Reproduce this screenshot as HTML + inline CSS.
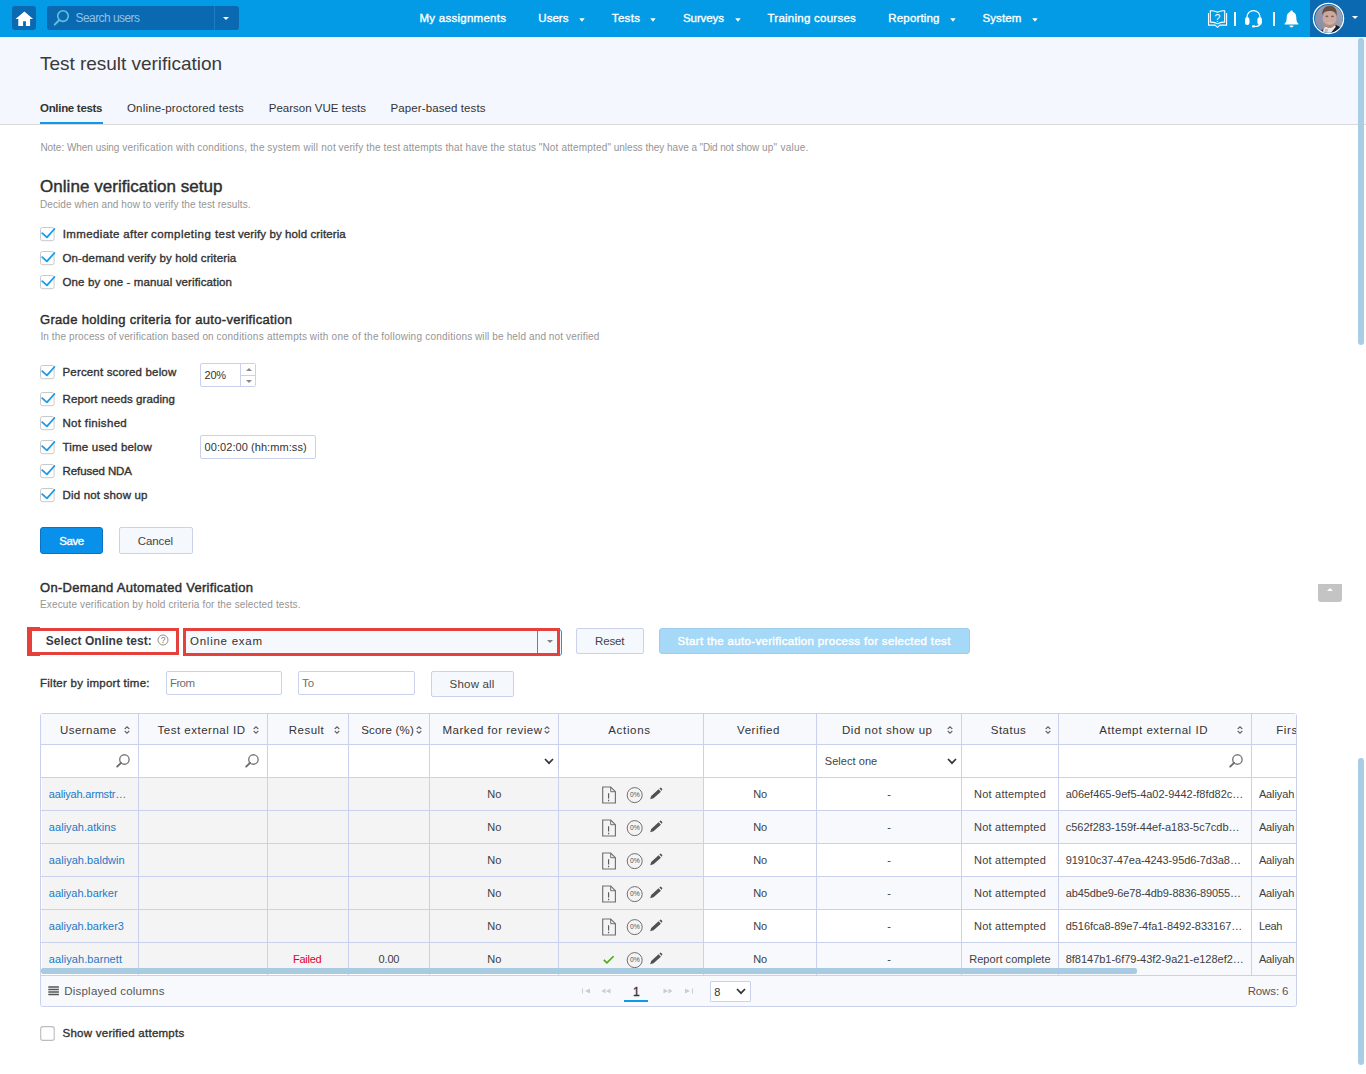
<!DOCTYPE html>
<html lang="en"><head><meta charset="utf-8"><title>Test result verification</title>
<style>
html,body{margin:0;padding:0}
body{width:1366px;height:1074px;position:relative;overflow:hidden;background:#fff;font-family:"Liberation Sans", "DejaVu Sans", sans-serif;}
.a{position:absolute;display:block}
.t{position:absolute;white-space:nowrap;display:block}
.nav{position:absolute;left:0;top:0;width:1366px;height:37px;background:#039be5}
.home,.search{background:#0a69b0;border-radius:3px}
.tri{width:0;height:0;border:3px solid transparent;border-bottom:0;border-top:3.5px solid #fff}
.inp{box-sizing:border-box;border:1px solid #cad1ec;border-radius:2px;background:#fff}
.btn{box-sizing:border-box;border:1px solid #cad1ec;border-radius:2px;background:#f5f8fc}
</style></head>
<body>
<!-- top navigation -->
<div class="nav">
<a class="a home" style="left:12px;top:6px;width:24px;height:24px;"><svg width="24" height="24" viewBox="0 0 24 24"><path d="M12.4 5.5 L3.5 13.1 H6.3 V20 H11.1 V15.2 H13.9 V20 H18.1 V13.1 H21.1 Z" fill="#fff"/></svg></a>
<div class="a search" style="left:47px;top:6px;width:192px;height:24px;">
<svg class="a" style="left:6px;top:4px" width="17" height="17" viewBox="0 0 17 17"><circle cx="10" cy="6.1" r="5.3" fill="none" stroke="#5fc1dd" stroke-width="1.6"/><path d="M6.3 10 L1.7 14.6" stroke="#5fc1dd" stroke-width="2" stroke-linecap="round"/></svg>
<div class="a" style="left:167px;top:0;width:1px;height:24px;background:#1b7fc6"></div>
<div class="a tri" style="left:176px;top:10.5px;border-top-color:#fff"></div>
</div>
<span class="t" id="t0" style="left:75.60px;top:12.00px;font-size:12px;line-height:12px;color:#8cc3ea;letter-spacing:-0.582px;">Search users</span>
<span class="t" id="t1" style="left:419.50px;top:13.00px;font-size:11.5px;line-height:11.5px;color:#fff;letter-spacing:0.262px;-webkit-text-stroke:0.35px #fff;">My assignments</span>
<span class="t" id="t2" style="left:538.30px;top:13.00px;font-size:11.5px;line-height:11.5px;color:#fff;letter-spacing:0.042px;-webkit-text-stroke:0.35px #fff;">Users</span>
<svg class="a" style="left:578.5px;top:18px" width="6" height="4" viewBox="0 0 6 4"><path d="M0.2 0.2 H5.7 L2.95 3.7 Z" fill="#fff"/></svg>
<span class="t" id="t3" style="left:611.80px;top:13.00px;font-size:11.5px;line-height:11.5px;color:#fff;letter-spacing:0.339px;-webkit-text-stroke:0.35px #fff;">Tests</span>
<svg class="a" style="left:650px;top:18px" width="6" height="4" viewBox="0 0 6 4"><path d="M0.2 0.2 H5.7 L2.95 3.7 Z" fill="#fff"/></svg>
<span class="t" id="t4" style="left:683.00px;top:13.00px;font-size:11.5px;line-height:11.5px;color:#fff;letter-spacing:-0.091px;-webkit-text-stroke:0.35px #fff;">Surveys</span>
<svg class="a" style="left:735px;top:18px" width="6" height="4" viewBox="0 0 6 4"><path d="M0.2 0.2 H5.7 L2.95 3.7 Z" fill="#fff"/></svg>
<span class="t" id="t5" style="left:767.50px;top:13.00px;font-size:11.5px;line-height:11.5px;color:#fff;letter-spacing:0.247px;-webkit-text-stroke:0.35px #fff;">Training courses</span>
<span class="t" id="t6" style="left:888.30px;top:13.00px;font-size:11.5px;line-height:11.5px;color:#fff;letter-spacing:0.166px;-webkit-text-stroke:0.35px #fff;">Reporting</span>
<svg class="a" style="left:950.2px;top:18px" width="6" height="4" viewBox="0 0 6 4"><path d="M0.2 0.2 H5.7 L2.95 3.7 Z" fill="#fff"/></svg>
<span class="t" id="t7" style="left:982.50px;top:13.00px;font-size:11.5px;line-height:11.5px;color:#fff;letter-spacing:0.091px;-webkit-text-stroke:0.35px #fff;">System</span>
<svg class="a" style="left:1032px;top:18px" width="6" height="4" viewBox="0 0 6 4"><path d="M0.2 0.2 H5.7 L2.95 3.7 Z" fill="#fff"/></svg>
<svg class="a" style="left:1207px;top:9px" width="21" height="20" viewBox="0 0 21 20">
<path d="M3.3 1.9 Q7 1.1 10.5 3.3 Q14 1.1 17.7 1.9 V13.3 Q14 12.7 10.5 14.9 Q7 12.7 3.3 13.3 Z" fill="none" stroke="#fff" stroke-width="1.1"/>
<path d="M1.5 3.9 V16.1 H8 L10.5 18.3 L13 16.1 H19.6 V3.9" fill="none" stroke="#fff" stroke-width="1.1"/>
<text x="10.4" y="13.1" font-size="10.5" fill="#fff" text-anchor="middle" font-family="Liberation Sans, sans-serif">?</text></svg>
<div class="a" style="left:1234px;top:12px;width:2px;height:14px;background:#fff;opacity:.92"></div>
<svg class="a" style="left:1244px;top:9px" width="19" height="19" viewBox="0 0 19 19">
<path d="M3 9.6 V8 A6.5 6.5 0 0 1 16 8 V9.6" fill="none" stroke="#fff" stroke-width="1.25"/>
<rect x="1" y="8.2" width="4.5" height="7.7" rx="2.2" fill="#fff"/><rect x="13.4" y="8.2" width="4.5" height="7.7" rx="2.2" fill="#fff"/>
<path d="M16.2 15 Q15.4 17.5 10.5 17.5" fill="none" stroke="#fff" stroke-width="1.2"/><ellipse cx="9.6" cy="17.4" rx="1.7" ry="1.05" fill="#fff"/></svg>
<div class="a" style="left:1273px;top:12px;width:2px;height:14px;background:#fff;opacity:.92"></div>
<svg class="a" style="left:1284px;top:9.5px" width="15" height="18" viewBox="0 0 15 18">
<path d="M7.5 0.6 C8.4 0.6 8.9 1.2 8.9 2 C11.3 2.7 12.3 4.8 12.3 7.4 C12.3 11 13 12.4 14.4 13.6 V14.6 H0.6 V13.6 C2 12.4 2.7 11 2.7 7.4 C2.7 4.8 3.7 2.7 6.1 2 C6.1 1.2 6.6 0.6 7.5 0.6 Z" fill="#fff"/>
<path d="M5.4 15.5 H9.6 A2.1 2.1 0 0 1 5.4 15.5 Z" fill="#e4f3fc"/></svg>
<div class="a" style="left:1310px;top:0px;width:56px;height:37px;background:#0a69b0"></div>
<svg class="a" style="left:1312px;top:2px" width="33" height="33" viewBox="0 0 33 33">
<defs><clipPath id="av"><circle cx="16.85" cy="16.9" r="13.85"/></clipPath>
<linearGradient id="avbg" x1="0" y1="1" x2="1" y2="0"><stop offset="0" stop-color="#7f869e"/><stop offset="1" stop-color="#a9abbc"/></linearGradient>
<filter id="avb" x="-10%" y="-10%" width="120%" height="120%"><feGaussianBlur stdDeviation="0.75"/></filter></defs>
<g clip-path="url(#av)"><g filter="url(#avb)"><rect x="-2" y="-2" width="37" height="37" fill="url(#avbg)"/>
<path d="M18.5 29 L24 23 L31 26.5 V35 H17 Z" fill="#1b1d28"/>
<path d="M6 31 L11 27 L13 33 Z" fill="#3a3d4c"/>
<path d="M10.5 30.5 L12.5 25.5 L20.5 22.5 L24 24.5 L18.5 31.5 Z" fill="#eae6e6"/>
<path d="M12.5 29.5 L13.5 26.5 L16.5 27.5 L14.5 31 Z" fill="#d6b0a2"/>
<ellipse cx="17.6" cy="16.6" rx="6.9" ry="8.6" fill="#cda89c"/>
<path d="M10.3 13.5 C9.6 6.5 14 3.6 18 3.8 C22.6 4 25.6 7.6 24.6 14 C23.6 10.4 22 9 18 9 C14 9 11.6 9.6 10.3 13.5 Z" fill="#6a4f41"/>
<path d="M11.6 19 C12.4 24.6 15 26 17.6 26 C20.2 26 23 24.6 23.8 19 C22.6 22 20.6 23 17.6 23 C14.6 23 12.8 22 11.6 19 Z" fill="#b08c7e"/>
<ellipse cx="14.9" cy="14.4" rx="1.5" ry="0.8" fill="#7c5f55"/><ellipse cx="20.5" cy="14.4" rx="1.5" ry="0.8" fill="#7c5f55"/>
<path d="M15.4 20.5 Q17.6 21.8 20 20.5" fill="none" stroke="#dcc8c2" stroke-width="0.7"/>
</g></g><circle cx="16.5" cy="16.45" r="15.1" fill="none" stroke="#fff" stroke-width="1.25"/></svg>
<div class="a tri" style="left:1352px;top:16px;border-top-color:#fff"></div>
</div>
<!-- page header and tabs -->
<div class="a" style="left:0px;top:37px;width:1366px;height:87px;background:#f4f7fe;border-bottom:1px solid #d9d9d9"></div>
<span class="t" id="t8" style="left:40.00px;top:54.00px;font-size:19px;line-height:19px;color:#3a3a3a;letter-spacing:-0.030px;">Test result verification</span>
<span class="t" id="t9" style="left:40.00px;top:103.00px;font-size:11.5px;line-height:11.5px;color:#333;letter-spacing:-0.303px;font-weight:bold;">Online tests</span>
<div class="a" style="left:40px;top:122px;width:63px;height:2px;background:#0d9ae8"></div>
<span class="t" id="t10" style="left:127.00px;top:103.00px;font-size:11.5px;line-height:11.5px;color:#333;letter-spacing:0.172px;">Online-proctored tests</span>
<span class="t" id="t11" style="left:268.75px;top:103.00px;font-size:11.5px;line-height:11.5px;color:#333;letter-spacing:0.006px;">Pearson VUE tests</span>
<span class="t" id="t12" style="left:390.50px;top:103.00px;font-size:11.5px;line-height:11.5px;color:#333;letter-spacing:0.104px;">Paper-based tests</span>
<div class="a" style="left:1358px;top:37.5px;width:6px;height:307px;background:#a9cde5;border-radius:3px"></div>
<div class="a" style="left:1357.5px;top:758px;width:6px;height:307px;background:#a9cde5;border-radius:3px"></div>
<div class="a" style="left:1318px;top:584px;width:24px;height:18px;background:#c4c4c4;border-radius:0 0 3px 3px"><div class="a" style="left:9px;top:3.8px;border:3px solid transparent;border-top:0;border-bottom:3.5px solid #fff;width:0;height:0"></div></div>
<!-- online verification setup -->
<span class="t" id="t13" style="left:40.40px;top:143.00px;font-size:10px;line-height:10px;color:#959595;letter-spacing:-0.030px;">Note: When using</span><span class="t" id="t14" style="left:122.25px;top:143.00px;font-size:10px;line-height:10px;color:#959595;letter-spacing:0.240px;">verification with</span><span class="t" id="t15" style="left:197.25px;top:143.00px;font-size:10px;line-height:10px;color:#959595;letter-spacing:0.193px;">conditions, the</span><span class="t" id="t16" style="left:267.25px;top:143.00px;font-size:10px;line-height:10px;color:#959595;letter-spacing:0.245px;">system will not</span><span class="t" id="t17" style="left:338.50px;top:143.00px;font-size:10px;line-height:10px;color:#959595;letter-spacing:0.159px;">verify the test</span><span class="t" id="t18" style="left:403.00px;top:143.00px;font-size:10px;line-height:10px;color:#959595;letter-spacing:0.142px;">attempts that have</span><span class="t" id="t19" style="left:490.50px;top:143.00px;font-size:10px;line-height:10px;color:#959595;letter-spacing:0.232px;">the status</span><span class="t" id="t20" style="left:538.75px;top:143.00px;font-size:10px;line-height:10px;color:#959595;letter-spacing:0.163px;">&quot;Not attempted&quot;</span><span class="t" id="t21" style="left:613.75px;top:143.00px;font-size:10px;line-height:10px;color:#959595;letter-spacing:-0.007px;">unless they have</span><span class="t" id="t22" style="left:691.50px;top:143.00px;font-size:10px;line-height:10px;color:#959595;letter-spacing:-0.143px;">a &quot;Did not show</span><span class="t" id="t23" style="left:762.00px;top:143.00px;font-size:10px;line-height:10px;color:#959595;letter-spacing:0.240px;">up&quot; value.</span>
<span class="t" id="t24" style="left:40.00px;top:178.00px;font-size:17px;line-height:17px;color:#2e2e2e;letter-spacing:0.044px;-webkit-text-stroke:0.42px #2e2e2e;">Online verification setup</span>
<span class="t" id="t25" style="left:40.00px;top:200.00px;font-size:10px;line-height:10px;color:#959595;letter-spacing:0.081px;">Decide when and how to verify the test results.</span>
<svg class="a" style="left:40px;top:227px" width="16" height="15" viewBox="0 0 16 15"><rect x="0.5" y="0.5" width="13.6" height="13.2" rx="2" fill="#fff" stroke="#c9c9c9"/><path d="M2.2 6.1 L6.9 10.4 L14.4 2" fill="none" stroke="#1a9be8" stroke-width="1.8" stroke-linecap="round" stroke-linejoin="round"/></svg>
<span class="t" id="t26" style="left:62.70px;top:229.00px;font-size:11.5px;line-height:11.5px;color:#333;letter-spacing:0.373px;-webkit-text-stroke:0.35px #333;">Immediate after</span><span class="t" id="t27" style="left:151.00px;top:229.00px;font-size:11.5px;line-height:11.5px;color:#333;letter-spacing:0.462px;-webkit-text-stroke:0.35px #333;">completing test</span><span class="t" id="t28" style="left:238.00px;top:229.00px;font-size:11.5px;line-height:11.5px;color:#333;letter-spacing:0.104px;-webkit-text-stroke:0.35px #333;">verify by hold criteria</span>
<svg class="a" style="left:40px;top:251px" width="16" height="15" viewBox="0 0 16 15"><rect x="0.5" y="0.5" width="13.6" height="13.2" rx="2" fill="#fff" stroke="#c9c9c9"/><path d="M2.2 6.1 L6.9 10.4 L14.4 2" fill="none" stroke="#1a9be8" stroke-width="1.8" stroke-linecap="round" stroke-linejoin="round"/></svg>
<span class="t" id="t29" style="left:62.50px;top:253.00px;font-size:11.5px;line-height:11.5px;color:#333;letter-spacing:0.136px;-webkit-text-stroke:0.35px #333;">On-demand verify by hold criteria</span>
<svg class="a" style="left:40px;top:275px" width="16" height="15" viewBox="0 0 16 15"><rect x="0.5" y="0.5" width="13.6" height="13.2" rx="2" fill="#fff" stroke="#c9c9c9"/><path d="M2.2 6.1 L6.9 10.4 L14.4 2" fill="none" stroke="#1a9be8" stroke-width="1.8" stroke-linecap="round" stroke-linejoin="round"/></svg>
<span class="t" id="t30" style="left:62.50px;top:277.00px;font-size:11.5px;line-height:11.5px;color:#333;letter-spacing:0.127px;-webkit-text-stroke:0.35px #333;">One by one - manual verification</span>
<span class="t" id="t31" style="left:40.00px;top:313.00px;font-size:13px;line-height:13px;color:#2e2e2e;letter-spacing:0.315px;-webkit-text-stroke:0.42px #2e2e2e;">Grade holding criteria for auto-verification</span>
<span class="t" id="t32" style="left:40.40px;top:332.00px;font-size:10px;line-height:10px;color:#959595;letter-spacing:0.116px;">In the process of</span><span class="t" id="t33" style="left:119.00px;top:332.00px;font-size:10px;line-height:10px;color:#959595;letter-spacing:0.148px;">verification based on</span><span class="t" id="t34" style="left:216.50px;top:332.00px;font-size:10px;line-height:10px;color:#959595;letter-spacing:0.238px;">conditions attempts</span><span class="t" id="t35" style="left:309.75px;top:332.00px;font-size:10px;line-height:10px;color:#959595;letter-spacing:0.261px;">with one of the</span><span class="t" id="t36" style="left:381.25px;top:332.00px;font-size:10px;line-height:10px;color:#959595;letter-spacing:0.223px;">following conditions</span><span class="t" id="t37" style="left:475.00px;top:332.00px;font-size:10px;line-height:10px;color:#959595;letter-spacing:0.134px;">will be held and</span><span class="t" id="t38" style="left:548.75px;top:332.00px;font-size:10px;line-height:10px;color:#959595;letter-spacing:0.148px;">not verified</span>
<svg class="a" style="left:40px;top:365px" width="16" height="15" viewBox="0 0 16 15"><rect x="0.5" y="0.5" width="13.6" height="13.2" rx="2" fill="#fff" stroke="#c9c9c9"/><path d="M2.2 6.1 L6.9 10.4 L14.4 2" fill="none" stroke="#1a9be8" stroke-width="1.8" stroke-linecap="round" stroke-linejoin="round"/></svg>
<span class="t" id="t39" style="left:62.50px;top:367.00px;font-size:11.5px;line-height:11.5px;color:#333;letter-spacing:0.166px;-webkit-text-stroke:0.35px #333;">Percent scored below</span>
<svg class="a" style="left:40px;top:392px" width="16" height="15" viewBox="0 0 16 15"><rect x="0.5" y="0.5" width="13.6" height="13.2" rx="2" fill="#fff" stroke="#c9c9c9"/><path d="M2.2 6.1 L6.9 10.4 L14.4 2" fill="none" stroke="#1a9be8" stroke-width="1.8" stroke-linecap="round" stroke-linejoin="round"/></svg>
<span class="t" id="t40" style="left:62.50px;top:394.00px;font-size:11.5px;line-height:11.5px;color:#333;letter-spacing:0.100px;-webkit-text-stroke:0.35px #333;">Report needs grading</span>
<svg class="a" style="left:40px;top:416px" width="16" height="15" viewBox="0 0 16 15"><rect x="0.5" y="0.5" width="13.6" height="13.2" rx="2" fill="#fff" stroke="#c9c9c9"/><path d="M2.2 6.1 L6.9 10.4 L14.4 2" fill="none" stroke="#1a9be8" stroke-width="1.8" stroke-linecap="round" stroke-linejoin="round"/></svg>
<span class="t" id="t41" style="left:62.50px;top:418.00px;font-size:11.5px;line-height:11.5px;color:#333;letter-spacing:0.320px;-webkit-text-stroke:0.35px #333;">Not finished</span>
<svg class="a" style="left:40px;top:440px" width="16" height="15" viewBox="0 0 16 15"><rect x="0.5" y="0.5" width="13.6" height="13.2" rx="2" fill="#fff" stroke="#c9c9c9"/><path d="M2.2 6.1 L6.9 10.4 L14.4 2" fill="none" stroke="#1a9be8" stroke-width="1.8" stroke-linecap="round" stroke-linejoin="round"/></svg>
<span class="t" id="t42" style="left:62.50px;top:442.00px;font-size:11.5px;line-height:11.5px;color:#333;letter-spacing:0.195px;-webkit-text-stroke:0.35px #333;">Time used below</span>
<svg class="a" style="left:40px;top:464px" width="16" height="15" viewBox="0 0 16 15"><rect x="0.5" y="0.5" width="13.6" height="13.2" rx="2" fill="#fff" stroke="#c9c9c9"/><path d="M2.2 6.1 L6.9 10.4 L14.4 2" fill="none" stroke="#1a9be8" stroke-width="1.8" stroke-linecap="round" stroke-linejoin="round"/></svg>
<span class="t" id="t43" style="left:62.50px;top:466.00px;font-size:11.5px;line-height:11.5px;color:#333;letter-spacing:-0.081px;-webkit-text-stroke:0.35px #333;">Refused NDA</span>
<svg class="a" style="left:40px;top:488px" width="16" height="15" viewBox="0 0 16 15"><rect x="0.5" y="0.5" width="13.6" height="13.2" rx="2" fill="#fff" stroke="#c9c9c9"/><path d="M2.2 6.1 L6.9 10.4 L14.4 2" fill="none" stroke="#1a9be8" stroke-width="1.8" stroke-linecap="round" stroke-linejoin="round"/></svg>
<span class="t" id="t44" style="left:62.50px;top:490.00px;font-size:11.5px;line-height:11.5px;color:#333;letter-spacing:0.181px;-webkit-text-stroke:0.35px #333;">Did not show up</span>
<div class="a inp" style="left:200px;top:363px;width:56px;height:24px;"><div class="a" style="left:39px;top:0;width:1px;height:22px;background:#cad1ec"></div><div class="a" style="left:40px;top:0;width:14px;height:22px;background:#fff"></div><div class="a" style="left:40px;top:11px;width:14px;height:1px;background:#cad1ec"></div><div class="a" style="left:45px;top:3.5px;border:3px solid transparent;border-top:0;border-bottom:3.5px solid #888;width:0;height:0"></div><div class="a" style="left:45px;top:15.5px;border:3px solid transparent;border-bottom:0;border-top:3.5px solid #888;width:0;height:0"></div></div>
<span class="t" id="t45" style="left:204.60px;top:370.00px;font-size:11px;line-height:11px;color:#333;letter-spacing:-0.266px;">20%</span>
<div class="a inp" style="left:200px;top:435px;width:116px;height:24px;"></div>
<span class="t" id="t46" style="left:204.60px;top:442.00px;font-size:11px;line-height:11px;color:#333;letter-spacing:0.063px;">00:02:00 (hh:mm:ss)</span>
<div class="a" style="left:40px;top:527px;width:63px;height:27px;background:#0990ea;border:1px solid #0b73c6;box-sizing:border-box;border-radius:3px"></div>
<span class="t" id="t47" style="left:59.25px;top:536.00px;font-size:11.5px;line-height:11.5px;color:#fff;letter-spacing:-0.456px;-webkit-text-stroke:0.35px #fff;">Save</span>
<div class="a btn" style="left:119px;top:527px;width:74px;height:27px;"></div>
<span class="t" id="t48" style="left:137.80px;top:536.00px;font-size:11.5px;line-height:11.5px;color:#444;letter-spacing:-0.103px;">Cancel</span>
<!-- on-demand automated verification -->
<span class="t" id="t49" style="left:40.00px;top:581.00px;font-size:13px;line-height:13px;color:#2e2e2e;letter-spacing:0.297px;-webkit-text-stroke:0.42px #2e2e2e;">On-Demand Automated Verification</span>
<span class="t" id="t50" style="left:40.00px;top:600.00px;font-size:10px;line-height:10px;color:#959595;letter-spacing:0.136px;">Execute verification by hold criteria for the selected tests.</span>
<div class="a" style="left:27px;top:628px;width:152px;height:27px;border:3px solid #e5403c;border-left-width:5px;box-sizing:border-box"></div>
<div class="a" style="left:27px;top:627px;width:13px;height:2px;background:#e5403c"></div>
<div class="a" style="left:27px;top:654px;width:13px;height:2px;background:#e5403c"></div>
<span class="t" id="t51" style="left:45.70px;top:635.00px;font-size:12px;line-height:12px;color:#3a3a44;letter-spacing:0.078px;font-weight:bold;">Select Online test:</span>
<svg class="a" style="left:156.5px;top:633.5px" width="12" height="12" viewBox="0 0 12 12"><circle cx="6" cy="6" r="5" fill="none" stroke="#858585" stroke-width="0.9"/><text x="6" y="9" font-size="8.5" fill="#7a7a7a" text-anchor="middle" font-family="Liberation Sans, sans-serif">?</text></svg>
<div class="a" style="left:184px;top:629px;width:377.6px;height:27px;background:#f5f8fc;border:1px solid #1a9be8;border-radius:3px;box-sizing:border-box"></div>
<div class="a" style="left:537px;top:630px;width:1px;height:24px;background:#1a9be8"></div>
<div class="a tri" style="left:547px;top:639.5px;border-top-color:#828282"></div>
<div class="a" style="left:183px;top:628px;width:377px;height:28px;border:3px solid #e5403c;box-sizing:border-box"></div>
<span class="t" id="t52" style="left:190.00px;top:636.00px;font-size:11.5px;line-height:11.5px;color:#333;letter-spacing:0.744px;">Online exam</span>
<div class="a btn" style="left:576px;top:628px;width:68px;height:26px;"></div>
<span class="t" id="t53" style="left:595.00px;top:636.00px;font-size:11.5px;line-height:11.5px;color:#444;letter-spacing:-0.162px;">Reset</span>
<div class="a" style="left:659px;top:628px;width:311px;height:26px;background:#a6d8f7;border:1px solid #9fcdec;box-sizing:border-box;border-radius:3px"></div>
<span class="t" id="t54" style="left:677.60px;top:636.00px;font-size:11.5px;line-height:11.5px;color:#fff;letter-spacing:0.329px;-webkit-text-stroke:0.42px #fff;">Start the auto-verification process for selected test</span>
<span class="t" id="t55" style="left:40.00px;top:678.00px;font-size:11.5px;line-height:11.5px;color:#333;letter-spacing:0.254px;-webkit-text-stroke:0.35px #333;">Filter by import time:</span>
<div class="a inp" style="left:166px;top:671px;width:116px;height:24px;"></div>
<span class="t" id="t56" style="left:170.00px;top:678.00px;font-size:11.5px;line-height:11.5px;color:#707070;letter-spacing:-0.615px;">From</span>
<div class="a inp" style="left:298px;top:671px;width:117px;height:24px;"></div>
<span class="t" id="t57" style="left:302.00px;top:678.00px;font-size:11.5px;line-height:11.5px;color:#707070;letter-spacing:0.094px;">To</span>
<div class="a btn" style="left:431px;top:671px;width:83px;height:26px;"></div>
<span class="t" id="t58" style="left:449.60px;top:679.00px;font-size:11.5px;line-height:11.5px;color:#444;letter-spacing:0.190px;">Show all</span>
<!-- results table -->
<div class="a" style="left:40px;top:713px;width:1257px;height:294px;border:1px solid #cad1ec;border-radius:3px;box-sizing:border-box;background:#fff"></div>
<div class="a" style="left:41px;top:714px;width:1255px;height:30px;background:#f8f9fd"></div>
<div class="a" style="left:703px;top:811px;width:593px;height:32px;background:#f8f9fd"></div>
<div class="a" style="left:703px;top:877px;width:593px;height:32px;background:#f8f9fd"></div>
<div class="a" style="left:703px;top:943px;width:593px;height:32px;background:#f8f9fd"></div>
<div class="a" style="left:42px;top:778px;width:661px;height:190px;background:#f4f4f4"></div>
<div class="a" style="left:41px;top:975px;width:1255px;height:31px;background:#f8f9fd;border-top:1px solid #cad1ec;box-sizing:border-box;border-radius:0 0 3px 3px"></div>
<div class="a" style="left:41px;top:744px;width:1255px;height:1px;background:#cad1ec"></div>
<div class="a" style="left:41px;top:777px;width:1255px;height:1px;background:#cad1ec"></div>
<div class="a" style="left:41px;top:810px;width:1255px;height:1px;background:#cad1ec"></div>
<div class="a" style="left:41px;top:843px;width:1255px;height:1px;background:#cad1ec"></div>
<div class="a" style="left:41px;top:876px;width:1255px;height:1px;background:#cad1ec"></div>
<div class="a" style="left:41px;top:909px;width:1255px;height:1px;background:#cad1ec"></div>
<div class="a" style="left:41px;top:942px;width:1255px;height:1px;background:#cad1ec"></div>
<div class="a" style="left:138px;top:714px;width:1px;height:261px;background:#cad1ec"></div>
<div class="a" style="left:267px;top:714px;width:1px;height:261px;background:#cad1ec"></div>
<div class="a" style="left:348px;top:714px;width:1px;height:261px;background:#cad1ec"></div>
<div class="a" style="left:429px;top:714px;width:1px;height:261px;background:#cad1ec"></div>
<div class="a" style="left:558px;top:714px;width:1px;height:261px;background:#cad1ec"></div>
<div class="a" style="left:703px;top:714px;width:1px;height:261px;background:#cad1ec"></div>
<div class="a" style="left:816px;top:714px;width:1px;height:261px;background:#cad1ec"></div>
<div class="a" style="left:961px;top:714px;width:1px;height:261px;background:#cad1ec"></div>
<div class="a" style="left:1058px;top:714px;width:1px;height:261px;background:#cad1ec"></div>
<div class="a" style="left:1251px;top:714px;width:1px;height:261px;background:#cad1ec"></div>
<div class="a" style="left:41px;top:968px;width:1096px;height:6px;background:#a9cbe2;border-radius:3px"></div>
<span class="t" id="t59" style="left:60.00px;top:725.00px;font-size:11.5px;line-height:11.5px;color:#333;letter-spacing:0.455px;">Username</span>
<svg class="a" style="left:124.25px;top:726px" width="6" height="8" viewBox="0 0 6 8"><path d="M0.7 3 L3 0.8 L5.3 3 M0.7 5 L3 7.2 L5.3 5" fill="none" stroke="#666" stroke-width="1.1"/></svg>
<span class="t" id="t60" style="left:157.50px;top:725.00px;font-size:11.5px;line-height:11.5px;color:#333;letter-spacing:0.506px;">Test external ID</span>
<svg class="a" style="left:253px;top:726px" width="6" height="8" viewBox="0 0 6 8"><path d="M0.7 3 L3 0.8 L5.3 3 M0.7 5 L3 7.2 L5.3 5" fill="none" stroke="#666" stroke-width="1.1"/></svg>
<span class="t" id="t61" style="left:288.75px;top:725.00px;font-size:11.5px;line-height:11.5px;color:#333;letter-spacing:0.478px;">Result</span>
<svg class="a" style="left:334px;top:726px" width="6" height="8" viewBox="0 0 6 8"><path d="M0.7 3 L3 0.8 L5.3 3 M0.7 5 L3 7.2 L5.3 5" fill="none" stroke="#666" stroke-width="1.1"/></svg>
<span class="t" id="t62" style="left:361.25px;top:725.00px;font-size:11.5px;line-height:11.5px;color:#333;letter-spacing:0.172px;">Score (%)</span>
<svg class="a" style="left:415.75px;top:726px" width="6" height="8" viewBox="0 0 6 8"><path d="M0.7 3 L3 0.8 L5.3 3 M0.7 5 L3 7.2 L5.3 5" fill="none" stroke="#666" stroke-width="1.1"/></svg>
<span class="t" id="t63" style="left:442.50px;top:725.00px;font-size:11.5px;line-height:11.5px;color:#333;letter-spacing:0.507px;">Marked for review</span>
<svg class="a" style="left:544.25px;top:726px" width="6" height="8" viewBox="0 0 6 8"><path d="M0.7 3 L3 0.8 L5.3 3 M0.7 5 L3 7.2 L5.3 5" fill="none" stroke="#666" stroke-width="1.1"/></svg>
<span class="t" id="t64" style="left:608.25px;top:725.00px;font-size:11.5px;line-height:11.5px;color:#333;letter-spacing:0.672px;">Actions</span>
<span class="t" id="t65" style="left:737.00px;top:725.00px;font-size:11.5px;line-height:11.5px;color:#333;letter-spacing:0.592px;">Verified</span>
<span class="t" id="t66" style="left:842.00px;top:725.00px;font-size:11.5px;line-height:11.5px;color:#333;letter-spacing:0.538px;">Did not show up</span>
<svg class="a" style="left:946.5px;top:726px" width="6" height="8" viewBox="0 0 6 8"><path d="M0.7 3 L3 0.8 L5.3 3 M0.7 5 L3 7.2 L5.3 5" fill="none" stroke="#666" stroke-width="1.1"/></svg>
<span class="t" id="t67" style="left:990.80px;top:725.00px;font-size:11.5px;line-height:11.5px;color:#333;letter-spacing:0.468px;">Status</span>
<svg class="a" style="left:1044.5px;top:726px" width="6" height="8" viewBox="0 0 6 8"><path d="M0.7 3 L3 0.8 L5.3 3 M0.7 5 L3 7.2 L5.3 5" fill="none" stroke="#666" stroke-width="1.1"/></svg>
<span class="t" id="t68" style="left:1099.25px;top:725.00px;font-size:11.5px;line-height:11.5px;color:#333;letter-spacing:0.545px;">Attempt external ID</span>
<svg class="a" style="left:1237px;top:726px" width="6" height="8" viewBox="0 0 6 8"><path d="M0.7 3 L3 0.8 L5.3 3 M0.7 5 L3 7.2 L5.3 5" fill="none" stroke="#666" stroke-width="1.1"/></svg>
<span class="t" id="t69" style="left:1276.25px;top:725.00px;font-size:11.5px;line-height:11.5px;color:#333;letter-spacing:0.598px;width:19.5px;overflow:hidden;">First</span>
<svg class="a" style="left:116.25px;top:754px" width="14" height="14" viewBox="0 0 14 14"><circle cx="8.4" cy="5.5" r="4.7" fill="none" stroke="#7a7a7a" stroke-width="1.4"/><path d="M5 8.9 L1.2 12.6" stroke="#6a6a6a" stroke-width="1.9" stroke-linecap="round"/></svg>
<svg class="a" style="left:245px;top:754px" width="14" height="14" viewBox="0 0 14 14"><circle cx="8.4" cy="5.5" r="4.7" fill="none" stroke="#7a7a7a" stroke-width="1.4"/><path d="M5 8.9 L1.2 12.6" stroke="#6a6a6a" stroke-width="1.9" stroke-linecap="round"/></svg>
<svg class="a" style="left:1229px;top:754px" width="14" height="14" viewBox="0 0 14 14"><circle cx="8.4" cy="5.5" r="4.7" fill="none" stroke="#7a7a7a" stroke-width="1.4"/><path d="M5 8.9 L1.2 12.6" stroke="#6a6a6a" stroke-width="1.9" stroke-linecap="round"/></svg>
<svg class="a" style="left:543.5px;top:758px" width="10" height="7" viewBox="0 0 10 7"><path d="M1 1 L5 5.2 L9 1" fill="none" stroke="#333" stroke-width="1.7"/></svg>
<svg class="a" style="left:946.5px;top:758px" width="10" height="7" viewBox="0 0 10 7"><path d="M1 1 L5 5.2 L9 1" fill="none" stroke="#333" stroke-width="1.7"/></svg>
<span class="t" id="t70" style="left:824.80px;top:756.00px;font-size:11px;line-height:11px;color:#444;letter-spacing:0.046px;">Select one</span>
<span class="t" id="t71" style="left:48.85px;top:789.00px;font-size:11px;line-height:11px;color:#1e78c6;letter-spacing:-0.191px;">aaliyah.armstr…</span>
<span class="t" id="t72" style="left:487.20px;top:789.00px;font-size:11px;line-height:11px;color:#404040;letter-spacing:0.038px;">No</span>
<svg class="a" style="left:601px;top:785.5px" width="16" height="18" viewBox="0 0 16 18"><path d="M1.7 1 H9.7 L14.4 5.7 V17 H1.7 Z" fill="none" stroke="#707070" stroke-width="1.15"/><path d="M9.7 1 V5.7 H14.4" fill="none" stroke="#707070" stroke-width="1"/><path d="M7.6 7.2 V12.4 M7.6 13.8 V15.2" stroke="#555" stroke-width="1.1"/></svg>
<svg class="a" style="left:625px;top:785.5px" width="18" height="18" viewBox="0 0 18 18"><circle cx="9.7" cy="9.1" r="7.5" fill="none" stroke="#707070" stroke-width="1"/><text x="9.9" y="11.4" font-size="6.8" fill="#555" text-anchor="middle" font-family="Liberation Sans, sans-serif">0%</text></svg>
<svg class="a" style="left:649px;top:786.5px" width="14" height="13" viewBox="0 0 14 13"><path d="M1.2 12.2 L2.2 9 L9.6 2.2 L11.9 4.7 L4.5 11.2 Z" fill="#505050"/><path d="M10.4 1.5 L11.3 0.7 Q11.8 0.4 12.3 0.9 L13.2 1.9 Q13.6 2.4 13.1 2.9 L12.6 3.8 Z" fill="#505050"/></svg>
<span class="t" id="t73" style="left:753.25px;top:789.00px;font-size:11px;line-height:11px;color:#404040;letter-spacing:-0.312px;">No</span>
<span class="t" id="t74" style="left:887.30px;top:789.00px;font-size:11px;line-height:11px;color:#404040;letter-spacing:0.000px;">-</span>
<span class="t" id="t75" style="left:974.00px;top:789.00px;font-size:11px;line-height:11px;color:#404040;letter-spacing:0.221px;">Not attempted</span>
<span class="t" id="t76" style="left:1065.70px;top:789.00px;font-size:11px;line-height:11px;color:#404040;letter-spacing:-0.012px;">a06ef465-9ef5-4a02-9442-f8fd82c…</span>
<span class="t" id="t77" style="left:1258.90px;top:789.00px;font-size:11px;line-height:11px;color:#404040;letter-spacing:-0.113px;">Aaliyah</span>
<span class="t" id="t78" style="left:48.85px;top:822.00px;font-size:11px;line-height:11px;color:#1e78c6;letter-spacing:0.038px;">aaliyah.atkins</span>
<span class="t" id="t79" style="left:487.20px;top:822.00px;font-size:11px;line-height:11px;color:#404040;letter-spacing:0.038px;">No</span>
<svg class="a" style="left:601px;top:818.5px" width="16" height="18" viewBox="0 0 16 18"><path d="M1.7 1 H9.7 L14.4 5.7 V17 H1.7 Z" fill="none" stroke="#707070" stroke-width="1.15"/><path d="M9.7 1 V5.7 H14.4" fill="none" stroke="#707070" stroke-width="1"/><path d="M7.6 7.2 V12.4 M7.6 13.8 V15.2" stroke="#555" stroke-width="1.1"/></svg>
<svg class="a" style="left:625px;top:818.5px" width="18" height="18" viewBox="0 0 18 18"><circle cx="9.7" cy="9.1" r="7.5" fill="none" stroke="#707070" stroke-width="1"/><text x="9.9" y="11.4" font-size="6.8" fill="#555" text-anchor="middle" font-family="Liberation Sans, sans-serif">0%</text></svg>
<svg class="a" style="left:649px;top:819.5px" width="14" height="13" viewBox="0 0 14 13"><path d="M1.2 12.2 L2.2 9 L9.6 2.2 L11.9 4.7 L4.5 11.2 Z" fill="#505050"/><path d="M10.4 1.5 L11.3 0.7 Q11.8 0.4 12.3 0.9 L13.2 1.9 Q13.6 2.4 13.1 2.9 L12.6 3.8 Z" fill="#505050"/></svg>
<span class="t" id="t80" style="left:753.25px;top:822.00px;font-size:11px;line-height:11px;color:#404040;letter-spacing:-0.312px;">No</span>
<span class="t" id="t81" style="left:887.30px;top:822.00px;font-size:11px;line-height:11px;color:#404040;letter-spacing:0.000px;">-</span>
<span class="t" id="t82" style="left:974.00px;top:822.00px;font-size:11px;line-height:11px;color:#404040;letter-spacing:0.221px;">Not attempted</span>
<span class="t" id="t83" style="left:1065.70px;top:822.00px;font-size:11px;line-height:11px;color:#404040;letter-spacing:0.007px;">c562f283-159f-44ef-a183-5c7cdb…</span>
<span class="t" id="t84" style="left:1258.90px;top:822.00px;font-size:11px;line-height:11px;color:#404040;letter-spacing:-0.113px;">Aaliyah</span>
<span class="t" id="t85" style="left:48.85px;top:855.00px;font-size:11px;line-height:11px;color:#1e78c6;letter-spacing:0.045px;">aaliyah.baldwin</span>
<span class="t" id="t86" style="left:487.20px;top:855.00px;font-size:11px;line-height:11px;color:#404040;letter-spacing:0.038px;">No</span>
<svg class="a" style="left:601px;top:851.5px" width="16" height="18" viewBox="0 0 16 18"><path d="M1.7 1 H9.7 L14.4 5.7 V17 H1.7 Z" fill="none" stroke="#707070" stroke-width="1.15"/><path d="M9.7 1 V5.7 H14.4" fill="none" stroke="#707070" stroke-width="1"/><path d="M7.6 7.2 V12.4 M7.6 13.8 V15.2" stroke="#555" stroke-width="1.1"/></svg>
<svg class="a" style="left:625px;top:851.5px" width="18" height="18" viewBox="0 0 18 18"><circle cx="9.7" cy="9.1" r="7.5" fill="none" stroke="#707070" stroke-width="1"/><text x="9.9" y="11.4" font-size="6.8" fill="#555" text-anchor="middle" font-family="Liberation Sans, sans-serif">0%</text></svg>
<svg class="a" style="left:649px;top:852.5px" width="14" height="13" viewBox="0 0 14 13"><path d="M1.2 12.2 L2.2 9 L9.6 2.2 L11.9 4.7 L4.5 11.2 Z" fill="#505050"/><path d="M10.4 1.5 L11.3 0.7 Q11.8 0.4 12.3 0.9 L13.2 1.9 Q13.6 2.4 13.1 2.9 L12.6 3.8 Z" fill="#505050"/></svg>
<span class="t" id="t87" style="left:753.25px;top:855.00px;font-size:11px;line-height:11px;color:#404040;letter-spacing:-0.312px;">No</span>
<span class="t" id="t88" style="left:887.30px;top:855.00px;font-size:11px;line-height:11px;color:#404040;letter-spacing:0.000px;">-</span>
<span class="t" id="t89" style="left:974.00px;top:855.00px;font-size:11px;line-height:11px;color:#404040;letter-spacing:0.221px;">Not attempted</span>
<span class="t" id="t90" style="left:1065.70px;top:855.00px;font-size:11px;line-height:11px;color:#404040;letter-spacing:-0.096px;">91910c37-47ea-4243-95d6-7d3a8…</span>
<span class="t" id="t91" style="left:1258.90px;top:855.00px;font-size:11px;line-height:11px;color:#404040;letter-spacing:-0.113px;">Aaliyah</span>
<span class="t" id="t92" style="left:48.85px;top:888.00px;font-size:11px;line-height:11px;color:#1e78c6;letter-spacing:-0.026px;">aaliyah.barker</span>
<span class="t" id="t93" style="left:487.20px;top:888.00px;font-size:11px;line-height:11px;color:#404040;letter-spacing:0.038px;">No</span>
<svg class="a" style="left:601px;top:884.5px" width="16" height="18" viewBox="0 0 16 18"><path d="M1.7 1 H9.7 L14.4 5.7 V17 H1.7 Z" fill="none" stroke="#707070" stroke-width="1.15"/><path d="M9.7 1 V5.7 H14.4" fill="none" stroke="#707070" stroke-width="1"/><path d="M7.6 7.2 V12.4 M7.6 13.8 V15.2" stroke="#555" stroke-width="1.1"/></svg>
<svg class="a" style="left:625px;top:884.5px" width="18" height="18" viewBox="0 0 18 18"><circle cx="9.7" cy="9.1" r="7.5" fill="none" stroke="#707070" stroke-width="1"/><text x="9.9" y="11.4" font-size="6.8" fill="#555" text-anchor="middle" font-family="Liberation Sans, sans-serif">0%</text></svg>
<svg class="a" style="left:649px;top:885.5px" width="14" height="13" viewBox="0 0 14 13"><path d="M1.2 12.2 L2.2 9 L9.6 2.2 L11.9 4.7 L4.5 11.2 Z" fill="#505050"/><path d="M10.4 1.5 L11.3 0.7 Q11.8 0.4 12.3 0.9 L13.2 1.9 Q13.6 2.4 13.1 2.9 L12.6 3.8 Z" fill="#505050"/></svg>
<span class="t" id="t94" style="left:753.25px;top:888.00px;font-size:11px;line-height:11px;color:#404040;letter-spacing:-0.312px;">No</span>
<span class="t" id="t95" style="left:887.30px;top:888.00px;font-size:11px;line-height:11px;color:#404040;letter-spacing:0.000px;">-</span>
<span class="t" id="t96" style="left:974.00px;top:888.00px;font-size:11px;line-height:11px;color:#404040;letter-spacing:0.221px;">Not attempted</span>
<span class="t" id="t97" style="left:1065.70px;top:888.00px;font-size:11px;line-height:11px;color:#404040;letter-spacing:-0.114px;">ab45dbe9-6e78-4db9-8836-89055…</span>
<span class="t" id="t98" style="left:1258.90px;top:888.00px;font-size:11px;line-height:11px;color:#404040;letter-spacing:-0.113px;">Aaliyah</span>
<span class="t" id="t99" style="left:48.85px;top:921.00px;font-size:11px;line-height:11px;color:#1e78c6;letter-spacing:-0.005px;">aaliyah.barker3</span>
<span class="t" id="t100" style="left:487.20px;top:921.00px;font-size:11px;line-height:11px;color:#404040;letter-spacing:0.038px;">No</span>
<svg class="a" style="left:601px;top:917.5px" width="16" height="18" viewBox="0 0 16 18"><path d="M1.7 1 H9.7 L14.4 5.7 V17 H1.7 Z" fill="none" stroke="#707070" stroke-width="1.15"/><path d="M9.7 1 V5.7 H14.4" fill="none" stroke="#707070" stroke-width="1"/><path d="M7.6 7.2 V12.4 M7.6 13.8 V15.2" stroke="#555" stroke-width="1.1"/></svg>
<svg class="a" style="left:625px;top:917.5px" width="18" height="18" viewBox="0 0 18 18"><circle cx="9.7" cy="9.1" r="7.5" fill="none" stroke="#707070" stroke-width="1"/><text x="9.9" y="11.4" font-size="6.8" fill="#555" text-anchor="middle" font-family="Liberation Sans, sans-serif">0%</text></svg>
<svg class="a" style="left:649px;top:918.5px" width="14" height="13" viewBox="0 0 14 13"><path d="M1.2 12.2 L2.2 9 L9.6 2.2 L11.9 4.7 L4.5 11.2 Z" fill="#505050"/><path d="M10.4 1.5 L11.3 0.7 Q11.8 0.4 12.3 0.9 L13.2 1.9 Q13.6 2.4 13.1 2.9 L12.6 3.8 Z" fill="#505050"/></svg>
<span class="t" id="t101" style="left:753.25px;top:921.00px;font-size:11px;line-height:11px;color:#404040;letter-spacing:-0.312px;">No</span>
<span class="t" id="t102" style="left:887.30px;top:921.00px;font-size:11px;line-height:11px;color:#404040;letter-spacing:0.000px;">-</span>
<span class="t" id="t103" style="left:974.00px;top:921.00px;font-size:11px;line-height:11px;color:#404040;letter-spacing:0.221px;">Not attempted</span>
<span class="t" id="t104" style="left:1065.70px;top:921.00px;font-size:11px;line-height:11px;color:#404040;letter-spacing:-0.046px;">d516fca8-89e7-4fa1-8492-833167…</span>
<span class="t" id="t105" style="left:1258.90px;top:921.00px;font-size:11px;line-height:11px;color:#404040;letter-spacing:-0.295px;">Leah</span>
<span class="t" id="t106" style="left:48.85px;top:954.00px;font-size:11px;line-height:11px;color:#1e78c6;letter-spacing:0.070px;">aaliyah.barnett</span>
<span class="t" id="t107" style="left:487.20px;top:954.00px;font-size:11px;line-height:11px;color:#404040;letter-spacing:0.038px;">No</span>
<svg class="a" style="left:602px;top:954.5px" width="13" height="10" viewBox="0 0 13 10"><path d="M1.8 4.9 L4.9 7.9 L11.6 1.3" fill="none" stroke="#43ad14" stroke-width="1.6"/></svg>
<svg class="a" style="left:625px;top:950.5px" width="18" height="18" viewBox="0 0 18 18"><circle cx="9.7" cy="9.1" r="7.5" fill="none" stroke="#707070" stroke-width="1"/><text x="9.9" y="11.4" font-size="6.8" fill="#555" text-anchor="middle" font-family="Liberation Sans, sans-serif">0%</text></svg>
<svg class="a" style="left:649px;top:951.5px" width="14" height="13" viewBox="0 0 14 13"><path d="M1.2 12.2 L2.2 9 L9.6 2.2 L11.9 4.7 L4.5 11.2 Z" fill="#505050"/><path d="M10.4 1.5 L11.3 0.7 Q11.8 0.4 12.3 0.9 L13.2 1.9 Q13.6 2.4 13.1 2.9 L12.6 3.8 Z" fill="#505050"/></svg>
<span class="t" id="t108" style="left:753.25px;top:954.00px;font-size:11px;line-height:11px;color:#404040;letter-spacing:-0.312px;">No</span>
<span class="t" id="t109" style="left:887.30px;top:954.00px;font-size:11px;line-height:11px;color:#404040;letter-spacing:0.000px;">-</span>
<span class="t" id="t110" style="left:969.20px;top:954.00px;font-size:11px;line-height:11px;color:#404040;letter-spacing:0.049px;">Report complete</span>
<span class="t" id="t111" style="left:1065.70px;top:954.00px;font-size:11px;line-height:11px;color:#404040;letter-spacing:-0.016px;">8f8147b1-6f79-43f2-9a21-e128ef2…</span>
<span class="t" id="t112" style="left:1258.90px;top:954.00px;font-size:11px;line-height:11px;color:#404040;letter-spacing:-0.113px;">Aaliyah</span>
<span class="t" id="t113" style="left:293.00px;top:954.00px;font-size:11px;line-height:11px;color:#e2002d;letter-spacing:-0.244px;">Failed</span>
<span class="t" id="t114" style="left:378.50px;top:954.00px;font-size:11px;line-height:11px;color:#404040;letter-spacing:-0.141px;">0.00</span>
<div class="a" style="left:41px;top:968px;width:1096px;height:6px;background:#a9cbe2;border-radius:3px"></div>
<svg class="a" style="left:48px;top:986px" width="11" height="10" viewBox="0 0 11 10"><path d="M0.3 0.9 H10.9 M0.3 3.4 H10.9 M0.3 5.9 H10.9 M0.3 8.4 H10.9" stroke="#555" stroke-width="1.5"/></svg>
<span class="t" id="t115" style="left:64.20px;top:986.00px;font-size:11.5px;line-height:11.5px;color:#555;letter-spacing:0.230px;">Displayed columns</span>
<svg class="a" style="left:582px;top:988px" width="9" height="6" viewBox="0 0 9 6"><path d="M0.5 0.5 V5.5" stroke="#cccccc" stroke-width="1"/><path d="M8 0.5 L3 3 L8 5.5 Z" fill="#cccccc"/></svg>
<svg class="a" style="left:600.8px;top:988px" width="10" height="6" viewBox="0 0 10 6"><path d="M4.5 0.5 L0.5 3 L4.5 5.5 Z M9.5 0.5 L5 3 L9.5 5.5 Z" fill="#cccccc"/></svg>
<span class="t" id="t116" style="left:632.90px;top:986.00px;font-size:12px;line-height:12px;color:#333;letter-spacing:0.000px;-webkit-text-stroke:0.35px #333;">1</span>
<div class="a" style="left:624px;top:1000px;width:24px;height:2px;background:#0d9ae8"></div>
<svg class="a" style="left:662.5px;top:988px" width="10" height="6" viewBox="0 0 10 6"><path d="M0.5 0.5 L5 3 L0.5 5.5 Z M5.5 0.5 L9.5 3 L5.5 5.5 Z" fill="#cccccc"/></svg>
<svg class="a" style="left:684.3px;top:988px" width="9" height="6" viewBox="0 0 9 6"><path d="M8.5 0.5 V5.5" stroke="#cccccc" stroke-width="1"/><path d="M1 0.5 L6 3 L1 5.5 Z" fill="#cccccc"/></svg>
<div class="a inp" style="left:710px;top:981px;width:41px;height:21px;border-radius:1px"></div>
<span class="t" id="t117" style="left:714.30px;top:987.00px;font-size:11px;line-height:11px;color:#333;letter-spacing:0.000px;">8</span>
<svg class="a" style="left:736px;top:988px" width="10" height="7" viewBox="0 0 10 7"><path d="M1 1 L5 5.2 L9 1" fill="none" stroke="#333" stroke-width="1.7"/></svg>
<span class="t" id="t118" style="left:1247.70px;top:986.00px;font-size:11.5px;line-height:11.5px;color:#555;letter-spacing:-0.141px;">Rows: 6</span>
<!-- show verified -->
<svg class="a" style="left:40px;top:1026px" width="16" height="16" viewBox="0 0 16 16"><rect x="0.7" y="0.6" width="13.5" height="13.8" rx="2.2" fill="#fff" stroke="#bcbcbc" stroke-width="1.1"/></svg>
<span class="t" id="t119" style="left:62.50px;top:1028.00px;font-size:11.5px;line-height:11.5px;color:#333;letter-spacing:0.257px;-webkit-text-stroke:0.35px #333;">Show verified attempts</span>
</body></html>
